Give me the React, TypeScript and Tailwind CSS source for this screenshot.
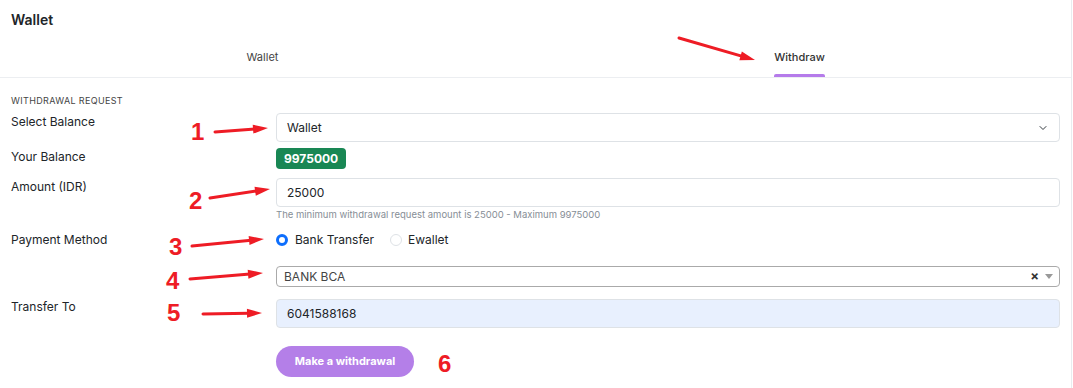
import { ChevronDown } from "lucide-react";

type ArrowProps = {
  readonly x1: number;
  readonly y1: number;
  readonly x2: number;
  readonly y2: number;
};

const RED = "#ee1c25";

// red annotation arrow drawn over the screenshot
function Arrow({ x1, y1, x2, y2 }: ArrowProps) {
  const dx = x2 - x1;
  const dy = y2 - y1;
  const len = Math.hypot(dx, dy);
  const ux = dx / len;
  const uy = dy / len;
  const head = 15;
  const half = 4.5;
  const bx = x2 - ux * head;
  const by = y2 - uy * head;
  const pts = [
    `${x2},${y2}`,
    `${bx - uy * half},${by + ux * half}`,
    `${bx + uy * half},${by - ux * half}`,
  ].join(" ");
  return (
    <g>
      <line x1={x1} y1={y1} x2={bx + ux * 2} y2={by + uy * 2} stroke={RED} strokeWidth={3} strokeLinecap="round" />
      <polygon points={pts} fill={RED} />
    </g>
  );
}

const numbers = [
  { n: "1", left: 191, top: 117 },
  { n: "2", left: 189, top: 186 },
  { n: "3", left: 169, top: 232 },
  { n: "4", left: 166, top: 266 },
  { n: "5", left: 167, top: 298 },
  { n: "6", left: 438, top: 349 },
];

function Row({ label, children, className }: { label: string; children: React.ReactNode; className?: string }) {
  return (
    <div className={"flex " + (className ?? "")}>
      <div className="w-[265px] shrink-0 text-[12px] leading-[18px] text-[#212529]">{label}</div>
      <div className="flex-1">{children}</div>
    </div>
  );
}

export default function App() {
  return (
    <main
      className="relative h-[388px] w-[1072px] overflow-hidden border-r border-[#e9ecef] bg-white"
      style={{ fontFamily: "Inter, 'Noto Sans', sans-serif" }}
    >
      <header className="px-[11px] pt-[10px]">
        <h1 className="text-[14px] font-semibold leading-[20px] text-[#212529]">Wallet</h1>
      </header>

      <nav className="mt-[18px] flex border-b border-[#eceef1]">
        <div className="-ml-[6px] flex w-[537px] justify-center">
          <span className="pb-[10px] text-[11px] leading-[19px] text-[#444]">Wallet</span>
        </div>
        <div className="flex w-[537px] justify-center">
          <span className="relative pb-[10px] text-[11px] font-medium leading-[19px] text-[#333]">
            Withdraw
            <span className="absolute inset-x-0 bottom-0 h-[3px] rounded-t-[2px] bg-[#b57bea]" />
          </span>
        </div>
      </nav>

      <section className="px-[11px] pr-[11px]">
        <p className="mt-[17px] text-[9px] uppercase leading-[12px] tracking-[0.35px] text-[#444]">
          Withdrawal Request
        </p>

        <Row label="Select Balance" className="mt-[6px] leading-none">
          <div className="flex h-[29px] items-center justify-between rounded-[4px] border border-[#dee2e6] pl-[10px] pr-[10px] text-[12px] text-[#212529]">
            <span>Wallet</span>
            <ChevronDown size={12} strokeWidth={2} className="text-[#343a40]" />
          </div>
        </Row>

        <Row label="Your Balance" className="mt-[6px]">
          <div className="flex h-[21px] w-fit items-center rounded-[4px] bg-[#198754] px-[8px] text-[12px] font-bold text-white">
            9975000
          </div>
        </Row>

        <Row label="Amount (IDR)" className="mt-[9px]">
          <div className="flex h-[29px] items-center rounded-[4px] border border-[#dee2e6] pl-[10px] text-[12px] text-[#212529]">
            25000
          </div>
          <p className="mt-[1px] text-[9.5px] leading-[14px] text-[#868e96]">
            The minimum withdrawal request amount is 25000 - Maximum 9975000
          </p>
        </Row>

        <Row label="Payment Method" className="mt-[9px]">
          <div className="flex h-[18px] items-center text-[12px] text-[#212529]">
            <span className="mr-[7px] h-[12px] w-[12px] rounded-full border-[3.5px] border-[#0d6efd] bg-white" />
            <span>Bank Transfer</span>
            <span className="ml-[16px] mr-[6px] h-[12px] w-[12px] rounded-full border border-[#dee2e6] bg-white" />
            <span>Ewallet</span>
          </div>
        </Row>

        <Row label="" className="mt-[17px]">
          <div className="flex h-[21px] items-center justify-between rounded-[4px] border border-[#aaa] pl-[7px] pr-[6px] text-[12px] text-[#444]">
            <span>BANK BCA</span>
            <span className="flex items-center gap-[6px]">
              <span className="text-[13px] font-bold leading-none text-[#333]">×</span>
              <span className="h-0 w-0 border-x-[4px] border-t-[5px] border-x-transparent border-t-[#999]" />
            </span>
          </div>
        </Row>

        <Row label="Transfer To" className="mt-[11px]">
          <div className="mt-[1px] flex h-[29px] items-center rounded-[4px] border border-[#dee2e6] bg-[#e8f0fe] pl-[10px] text-[12px] text-[#212529]">
            6041588168
          </div>
        </Row>

        <div className="mt-[18px] pl-[265px]">
          <button className="h-[31px] w-[138px] rounded-full bg-[#b47fe8] text-[11px] font-bold text-white">
            Make a withdrawal
          </button>
        </div>
      </section>

      <svg className="pointer-events-none absolute inset-0" width={1072} height={388}>
        <Arrow x1={679} y1={38} x2={755} y2={60} />
        <Arrow x1={215} y1={132} x2={268} y2={128} />
        <Arrow x1={210} y1={198} x2={270} y2={189} />
        <Arrow x1={192} y1={246} x2={264} y2={239} />
        <Arrow x1={190} y1={279} x2={263} y2={273} />
        <Arrow x1={203} y1={314} x2={262} y2={313} />
      </svg>

      {numbers.map((item) => (
        <span
          key={item.n}
          className="absolute text-[24px] font-bold leading-[30px]"
          style={{ left: item.left, top: item.top, color: RED, fontFamily: "'Liberation Sans', Arial, sans-serif" }}
        >
          {item.n}
        </span>
      ))}
    </main>
  );
}
